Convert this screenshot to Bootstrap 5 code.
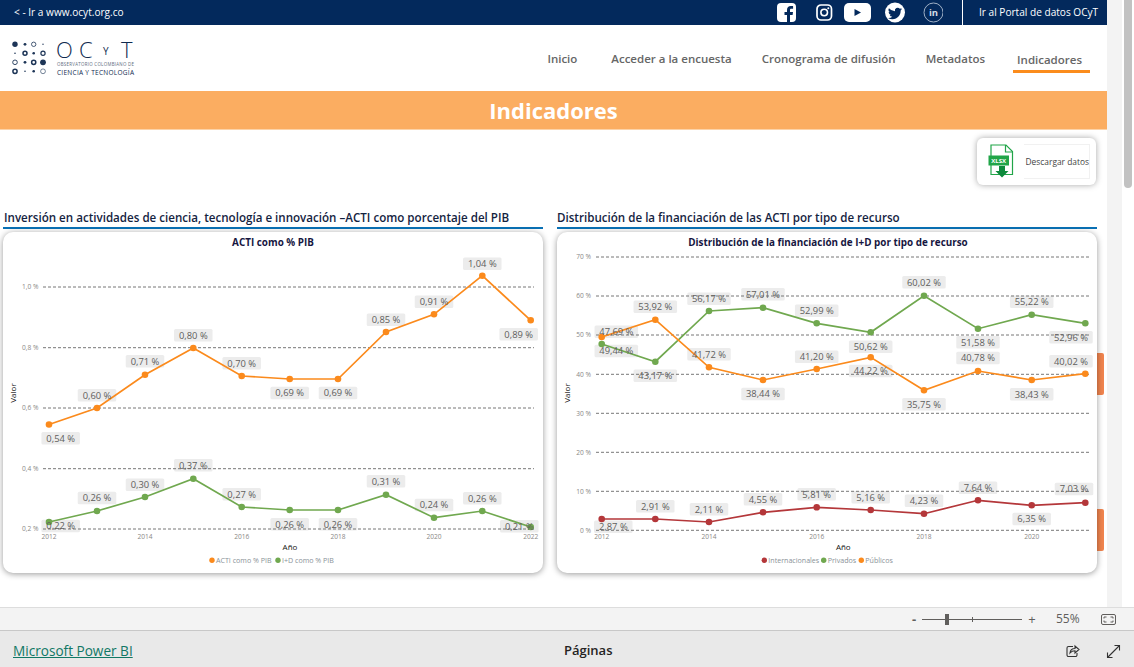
<!DOCTYPE html>
<html lang="es">
  <head>
    <meta charset="UTF-8" />
    <meta name="viewport" content="width=device-width, initial-scale=1.0" />
    <title>Indicadores - OCyT</title>
    <link
      href="https://cdn.jsdelivr.net/npm/bootstrap@5.3.0/dist/css/bootstrap.min.css"
      rel="stylesheet"
    />
    <style>
      body {
        width: 1134px;
        height: 667px;
        overflow: hidden;
        font-family: "Open Sans", "Liberation Sans", sans-serif;
        background: #fff;
      }
      .report-area { height: 607px; }
      .report-main { width: 1107px; }
      /* Barra superior */
      .top-strip { height: 25px; background: #03295c; color: #fff; font-size: 10.1px; }
      .top-strip a { color: #fff; text-decoration: none; }
      .back-link { margin-left: 14px; }
      .social-icons svg { display: block; }
      .portal-link { width: 145px; height: 25px; margin-left: 19px; padding-left: 16px; border-left: 1px solid #fff; line-height: 25px; white-space: nowrap; }
      /* Cabecera */
      .site-head { height: 66px; padding-left: 12px; }
      .site-menu { margin: 0 17px 18px 0; gap: 30px; }
      .site-menu .nav-link { padding: 0 0 6px; color: #666; font-size: 11.5px; font-weight: 600; line-height: 16px; }
      .site-menu .nav-link.active-page { padding: 0 8px 2px 4px; border-bottom: 3px solid #fb8c1c; margin-left: -2px; }
      .title-band { height: 39px; background: #fbad61; border-bottom: 1px solid #fcd3a8; color: #fff; font-size: 22px; font-weight: 700; line-height: 38px; }
      /* Descarga */
      .download-row { height: 80px; padding: 8px 11px 0 0; }
      .download-box { width: 119px; height: 47px; padding: 6px; border-radius: 6px; background: #fff; box-shadow: 0 0 6px rgba(0, 0, 0, .35); }
      .download-text { width: 66px; height: 35px; border: 1px solid #f1f1f1; border-left: 0; color: #444; font-size: 8.4px; line-height: 33px; white-space: nowrap; }
      /* Graficos */
      .chart-row { gap: 14px; padding-left: 3px; }
      .chart-col { width: 540px; }
      .chart-heading { height: 19px; margin: 0 0 3px; border-bottom: 2px solid #0a71b5; color: #14233f; font-size: 11.6px; font-weight: 600; line-height: 15px; white-space: nowrap; }
      .heading-first { padding-left: 1px; }
      .chart-card { height: 341px; border: 0; border-radius: 10px; box-shadow: 0 1px 6px rgba(0, 0, 0, .4); overflow: hidden; }
      .chart-card svg { display: block; }
      .chart-holder { position: relative; }
      .side-tab { position: absolute; left: 540px; width: 7px; height: 42px; background: #f1854f; border-radius: 0 2px 2px 0; }
      .side-tab-a { top: 121px; }
      .side-tab-b { top: 277px; }
      svg text { font-family: "Open Sans", "Liberation Sans", sans-serif; }
      .c-title { font-size: 9.9px; font-weight: 700; fill: #16163f; text-anchor: middle; }
      .c-label { font-size: 9.4px; fill: #605e5c; text-anchor: middle; }
      .c-tick { font-size: 6.6px; fill: #8a8886; }
      .c-tick-y { text-anchor: end; }
      .c-axis { font-size: 8px; fill: #111; text-anchor: middle; }
      .c-legend { font-size: 7.1px; fill: #8a9298; }
      /* Scroll */
      .scroll-track { width: 15px; background: #f3f3f3; }
      .scroll-side { width: 12px; padding: 0 2px; }
      .scroll-thumb { height: 188px; border-radius: 0 0 4px 4px; background: #c2c2c2; }
      /* Barras de Power BI */
      .zoom-bar { height: 24px; background: #f3f3f3; border-top: 1px solid #ddd; border-bottom: 1px solid #c8c8c8; color: #605e5c; font-size: 13px; padding-right: 18px; }
      .zoom-sign { width: 8px; line-height: 20px; text-align: center; }
      .zoom-track { position: relative; width: 100px; height: 1px; margin: 0 6px 0 4px; background: #605e5c; }
      .zoom-thumb { position: absolute; left: 23px; top: -5px; width: 4px; height: 11px; background: #605e5c; }
      .zoom-tick { position: absolute; left: 50px; top: -2px; width: 1px; height: 5px; background: #605e5c; }
      .zoom-pct { width: 24px; margin: 0 21px 0 20px; font-size: 12px; }
      .pbi-bar { height: 36px; background: #e9e9e9; padding: 4px 13px 0 13px; }
      .pbi-link { width: 120px; color: #117865; font-size: 13.6px; white-space: nowrap; }
      .pbi-pages { margin-left: 431px; color: #252423; font-size: 13px; font-weight: 600; }
      .pbi-tools { gap: 26px; }
    </style>
  </head>
  <body>
    <div class="report-area d-flex">
      <div class="report-main">
        <!-- Barra superior -->
        <div class="top-strip d-flex align-items-center justify-content-between">
          <a class="back-link" href="#">&lt; - Ir a www.ocyt.org.co</a>
          <div class="d-flex align-items-center">
            <div class="social-icons d-flex align-items-center">
              <svg width="166" height="25" viewBox="777 0 166 25">
                <rect x="777" y="3" width="19" height="19" rx="4" fill="#fff" />
                <path d="M790 22v-7h2.600l.4-3H790v-1.800c0-.9.300-1.400 1.500-1.400h1.600V6.200c-.3 0-1.200-.1-2.300-.1-2.300 0-3.800 1.400-3.800 3.900V12h-2.500v3H787v7z" fill="#03295c" />
                <rect x="817" y="5" width="14.500" height="15" rx="4" fill="none" stroke="#fff" stroke-width="1.700" />
                <circle cx="824.200" cy="12.500" r="3.300" fill="none" stroke="#fff" stroke-width="1.600" />
                <circle cx="828.300" cy="8.200" r="1" fill="#fff" />
                <rect x="844" y="3" width="27" height="19" rx="5" fill="#fff" />
                <path d="M854.500 9l6.500 3.500-6.500 3.500z" fill="#03295c" />
                <circle cx="895" cy="12.500" r="10" fill="#fff" />
                <g transform="translate(888 6) scale(.88)">
                  <path d="M5.026 15c6.038 0 9.341-5.003 9.341-9.334 0-.14 0-.282-.006-.422A6.685 6.685 0 0 0 16 3.542a6.658 6.658 0 0 1-1.889.518 3.301 3.301 0 0 0 1.447-1.817 6.533 6.533 0 0 1-2.087.793A3.286 3.286 0 0 0 7.875 6.030a9.325 9.325 0 0 1-6.767-3.429 3.289 3.289 0 0 0 1.018 4.382A3.323 3.323 0 0 1 .64 6.575v.045a3.288 3.288 0 0 0 2.632 3.218 3.203 3.203 0 0 1-.865.115 3.230 3.230 0 0 1-.614-.057 3.283 3.283 0 0 0 3.067 2.277A6.588 6.588 0 0 1 .78 13.580a6.320 6.320 0 0 1-.78-.045A9.344 9.344 0 0 0 5.026 15z" fill="#03295c" />
                </g>
                <circle cx="933.500" cy="12.500" r="9.500" fill="none" stroke="#9fb0c6" stroke-width="1" />
                <text x="933.500" y="15.800" text-anchor="middle" font-size="9.500" font-weight="700" fill="#d5dce6">in</text>
              </svg>
            </div>
            <a class="portal-link" href="#">Ir al Portal de datos OCyT</a>
          </div>
        </div>

        <!-- Cabecera -->
        <div class="site-head d-flex align-items-center justify-content-between">
          <svg width="124" height="60" viewBox="12 28 124 60" aria-label="OCyT">
            <g fill="#1d3557">
              <circle cx="15" cy="44.300" r="2.700" /><circle cx="25" cy="44.300" r="1.400" /><circle cx="43" cy="44.300" r=".7" />
              <circle cx="15" cy="53.300" r=".8" /><circle cx="33.700" cy="53.300" r="1.300" />
              <circle cx="25" cy="62.300" r="1.400" /><circle cx="43" cy="62.300" r="2.900" />
              <circle cx="25" cy="71.300" r=".8" /><circle cx="33.700" cy="71.300" r="1.300" />
            </g>
            <g fill="none" stroke="#1d3557">
              <circle cx="33.700" cy="44.300" r="2.200" stroke-width=".8" /><circle cx="25" cy="53.300" r="2" stroke-width="1.500" /><circle cx="43" cy="53.300" r="2.100" stroke-width="1.200" />
              <circle cx="15" cy="62.300" r="2.300" stroke-width=".9" /><circle cx="33.700" cy="62.300" r="2.100" stroke-width="1.500" />
              <circle cx="15" cy="71.300" r="2.100" stroke-width="1.500" /><circle cx="43" cy="71.300" r="2.400" stroke-width=".6" />
            </g>
            <g fill="#0f2a4f" font-weight="300">
              <text x="56" y="57.500" font-size="22">O</text>
              <text x="79" y="57.500" font-size="22">C</text>
              <text x="103" y="54.500" font-size="10" font-weight="400">Y</text>
              <text x="121" y="57.500" font-size="22">T</text>
              <text x="57" y="66" font-size="4.400" font-weight="400" fill="#5d6b7d" textLength="77">OBSERVATORIO COLOMBIANO DE</text>
              <text x="57" y="74.500" font-size="6.500" font-weight="400" textLength="77">CIENCIA Y TECNOLOGÍA</text>
            </g>
          </svg>
          <nav class="site-menu nav align-items-end align-self-end">
            <a class="nav-link me-1" href="#">Inicio</a>
            <a class="nav-link" href="#">Acceder a la encuesta</a>
            <a class="nav-link" href="#">Cronograma de difusión</a>
            <a class="nav-link" href="#">Metadatos</a>
            <a class="nav-link active-page" href="#">Indicadores</a>
          </nav>
        </div>

        <div class="title-band text-center">Indicadores</div>

        <div class="download-row d-flex justify-content-end align-items-start">
          <div class="download-box d-flex align-items-center">
            <svg width="41" height="35" viewBox="983 145 41 35">
              <path d="M991 146h15l6.500 6.500V175.500H991z" fill="#fff" stroke="#21a548" stroke-width="1.200" />
              <path d="M1005.500 146v7h7" fill="none" stroke="#21a548" stroke-width="1.200" />
              <rect x="988.500" y="156.500" width="20.500" height="10" fill="#21a548" />
              <text x="998.700" y="163.800" text-anchor="middle" font-size="6" font-weight="700" fill="#fff">XLSX</text>
              <path d="M999 167h6v5h3.500l-6.500 6.500-6.500-6.500h3.500z" fill="#0e8a3c" />
            </svg>
            <div class="download-text text-end">Descargar datos</div>
          </div>
        </div>

        <!-- Graficos -->
        <div class="chart-row d-flex">
          <div class="chart-col">
            <h2 class="chart-heading heading-first">Inversión en actividades de ciencia, tecnología e innovación –ACTI como porcentaje del PIB</h2>
            <div class="chart-card card">
              <svg id="chartPib" width="540" height="341" viewBox="3 232 540 341"></svg>
            </div>
          </div>
          <div class="chart-col">
            <h2 class="chart-heading">Distribución de la financiación de las ACTI por tipo de recurso</h2>
            <div class="chart-holder">
              <span class="side-tab side-tab-a"></span>
              <span class="side-tab side-tab-b"></span>
              <div class="chart-card card">
                <svg id="chartFuentes" width="540" height="341" viewBox="557 232 540 341"></svg>
              </div>
            </div>
          </div>
        </div>
      </div>
      <div class="scroll-track"></div>
      <div class="scroll-side"><div class="scroll-thumb"></div></div>
    </div>

    <!-- Zoom -->
    <div class="zoom-bar d-flex align-items-center justify-content-end">
      <span class="zoom-sign fw-bold">-</span>
      <div class="zoom-track"><span class="zoom-thumb"></span><span class="zoom-tick"></span></div>
      <span class="zoom-sign">+</span>
      <span class="zoom-pct">55%</span>
      <svg width="15" height="11" viewBox="0 0 15 11">
        <rect x=".5" y=".5" width="14" height="10" rx="1.500" fill="none" stroke="#605e5c" />
        <path d="M3 4.500V3h2.500M12 4.500V3H9.500M3 6.500V8h2.500M12 6.500V8H9.500" fill="none" stroke="#605e5c" />
      </svg>
    </div>

    <div class="pbi-bar d-flex align-items-center">
      <a class="pbi-link" href="#">Microsoft Power BI</a>
      <span class="pbi-pages">Páginas</span>
      <div class="pbi-tools d-flex align-items-center ms-auto">
        <svg width="14" height="14" viewBox="0 0 14 14" fill="none" stroke="#333" stroke-width="1.100">
          <path d="M7 2.500H2.500a1.500 1.500 0 0 0-1.500 1.500v7a1.500 1.500 0 0 0 1.500 1.500h7a1.500 1.500 0 0 0 1.500-1.500V9" />
          <path d="M4 9c.3-3 2.500-4.500 5-4.500V2l4 3.500L9 9V6.800C7 6.800 5.300 7.500 4 9z" />
        </svg>
        <svg width="15" height="15" viewBox="0 0 15 15" fill="none" stroke="#333" stroke-width="1.100">
          <path d="M1.500 13.500l12-12M8.500 1.500h5v5M1.500 8.500v5h5" />
        </svg>
      </div>
    </div>

    <script src="https://cdn.jsdelivr.net/npm/bootstrap@5.3.0/dist/js/bootstrap.bundle.min.js"></script>
    <script>
      const ORANGE = "#fb8a1c", GREEN = "#70a84f", RED = "#b4373a";

      // Posiciones leidas del informe original; [x, y, texto] para las etiquetas
      const pib = {
        id: "chartPib",
        title: "ACTI como % PIB",
        titleX: 273,
        grid: [[287, "1,0 %"], [347.7, "0,8 %"], [408, "0,6 %"], [468.7, "0,4 %"], [529, "0,2 %"]],
        gridX: [43, 534],
        tickX: 38.5,
        xs: [49, 97, 145, 193.3, 241.7, 289.7, 338, 386, 434, 482.3, 530.7],
        years: 6,
        axisX: 290,
        axisY: 13,
        boxW: 38.5,
        series: [
          { color: GREEN, ys: [522, 511, 497, 478.7, 507, 510, 510, 494.7, 517.7, 511, 527] },
          { color: ORANGE, ys: [424.5, 408, 374.7, 348, 376, 379, 379, 332, 314.3, 275.7, 320.3] },
        ],
        labels: [
          [60.7, 438.3, "0,54 %"], [97, 395.3, "0,60 %"], [145, 361.3, "0,71 %"], [193.3, 335.3, "0,80 %"],
          [241.7, 363.3, "0,70 %"], [289.7, 393, "0,69 %"], [338, 393, "0,69 %"], [386, 319.7, "0,85 %"],
          [434, 301.7, "0,91 %"], [482.3, 263.7, "1,04 %"], [518.7, 334.3, "0,89 %"],
          [60.7, 526, "0,22 %"], [97, 498, "0,26 %"], [145, 484.7, "0,30 %"], [193.3, 465.3, "0,37 %"],
          [241.7, 494.3, "0,27 %"], [289.7, 524.3, "0,26 %"], [338, 524.3, "0,26 %"], [386, 481.3, "0,31 %"],
          [434, 505, "0,24 %"], [482.3, 498.3, "0,26 %"], [519.3, 526.3, "0,21 %"],
        ],
        legend: [[212, ORANGE, "ACTI como % PIB"], [278, GREEN, "I+D como % PIB"]],
      };

      const fuentes = {
        id: "chartFuentes",
        title: "Distribución de la financiación de I+D por tipo de recurso",
        titleX: 828,
        grid: [[257, "70 %"], [296, "60 %"], [335, "50 %"], [374.3, "40 %"], [413.3, "30 %"], [452.3, "20 %"], [491.3, "10 %"], [530.3, "0 %"]],
        gridX: [596, 1090.7],
        tickX: 591,
        xs: [601.7, 655.3, 709, 763, 816.7, 870.7, 924, 978, 1031.7, 1085.3],
        years: 5,
        axisX: 843.3,
        axisY: 567,
        boxW: 43.5,
        series: [
          { color: RED, ys: [519, 519, 522, 512.3, 507.3, 510, 513.7, 500.3, 505.3, 502.7] },
          { color: GREEN, ys: [344, 361.7, 311, 307.7, 323.3, 332.3, 295.7, 328.7, 314.7, 323.3] },
          { color: ORANGE, ys: [337, 319.7, 367.3, 380, 369, 357.3, 390.3, 371, 380, 373.7] },
        ],
        labels: [
          [616.3, 351, "49,44 %"], [655.3, 375.7, "43,17 %"], [709, 298.7, "56,17 %"], [763, 294.3, "57,01 %"],
          [816.7, 310.7, "52,99 %"], [870.7, 346.7, "50,62 %"], [924, 282.3, "60,02 %"], [978, 342.3, "51,58 %"],
          [1031.7, 301.7, "55,22 %"], [1071, 337.3, "52,96 %"],
          [616.3, 331.7, "47,69 %"], [655.3, 306.7, "53,92 %"], [709, 354.3, "41,72 %"], [763, 394, "38,44 %"],
          [816.7, 356.7, "41,20 %"], [870.7, 371, "44,22 %"], [924, 404.3, "35,75 %"], [978, 358, "40,78 %"],
          [1031.7, 394.3, "38,43 %"], [1071, 361.3, "40,02 %"],
          [613.3, 526.7, "2,87 %"], [655.3, 506.3, "2,91 %"], [709, 509.3, "2,11 %"], [763, 499.3, "4,55 %"],
          [816.7, 494.3, "5,81 %"], [870.7, 497.3, "5,16 %"], [924, 500.7, "4,23 %"], [978, 487.7, "7,64 %"],
          [1031.7, 519, "6,35 %"], [1074, 489, "7,03 %"],
        ],
        legend: [[764.3, RED, "Internacionales"], [823.7, GREEN, "Privados"], [861.3, ORANGE, "Públicos"]],
      };

      function drawChart(c) {
        let s = `<text class="c-title" x="${c.titleX}" y="245.500">${c.title}</text>`;

        // Las cajas van debajo de la reticula, como en el original
        c.labels.forEach(([x, y, t]) => {
          const w = t.length > 6 ? c.boxW : 38.5;
          s += `<rect x="${x - w / 2}" y="${y - 6.3}" width="${w}" height="12.600" rx="1.500" fill="#ececec" />`;
        });

        c.grid.forEach(([y, t]) => {
          s += `<line x1="${c.gridX[0]}" x2="${c.gridX[1]}" y1="${y}" y2="${y}" stroke="#777" stroke-dasharray="3 2" />`;
          s += `<text class="c-tick c-tick-y" x="${c.tickX}" y="${y + 2.3}">${t}</text>`;
        });

        for (let i = 0; i < c.years; i++) {
          s += `<text class="c-tick" text-anchor="middle" x="${c.xs[i * 2]}" y="539">${2012 + i * 2}</text>`;
        }
        s += `<text class="c-axis" x="${c.axisX}" y="550">Año</text>`;
        s += `<text class="c-axis" transform="translate(${c.axisY + 2.5} 393) rotate(-90)">Valor</text>`;

        c.series.forEach(({ color, ys }) => {
          const pts = ys.map((y, i) => `${c.xs[i]},${y}`).join(" ");
          s += `<polyline points="${pts}" fill="none" stroke="${color}" stroke-width="1.700" />`;
          ys.forEach((y, i) => {
            s += `<circle cx="${c.xs[i]}" cy="${y}" r="3.300" fill="${color}" />`;
          });
        });

        c.labels.forEach(([x, y, t]) => {
          s += `<text class="c-label" x="${x}" y="${y + 3.3}">${t}</text>`;
        });

        c.legend.forEach(([x, color, t]) => {
          s += `<circle cx="${x}" cy="560.300" r="2.700" fill="${color}" />`;
          s += `<text class="c-legend" x="${x + 4}" y="562.800">${t}</text>`;
        });

        document.getElementById(c.id).innerHTML = s;
      }

      drawChart(pib);
      drawChart(fuentes);
    </script>
  </body>
</html>
